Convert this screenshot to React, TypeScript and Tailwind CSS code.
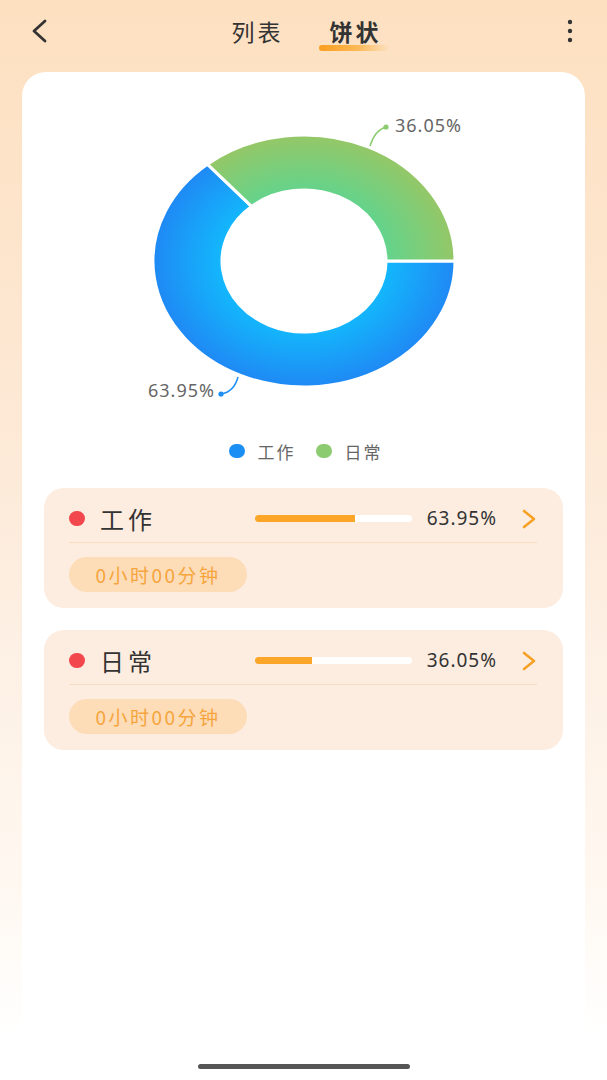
import type { ReactNode } from "react";

const cjk = "font-['Noto_Sans_CJK_SC','Noto_Sans',sans-serif]";

interface Item {
  name: string;
  percent: number;
  label: string;
  duration: string;
}

const items: Item[] = [
  { name: "工作", percent: 63.95, label: "63.95%", duration: "0小时00分钟" },
  { name: "日常", percent: 36.05, label: "36.05%", duration: "0小时00分钟" },
];

// donut geometry (svg coords, svg sits at the card's top-left)
const CX = 282;
const CY = 189;
const ORX = 151;
const ORY = 126;
const IRX = 82;
const IRY = 71;

function donutPaths(share: number) {
  const a = share * 2 * Math.PI;
  const ox = CX + ORX * Math.cos(a);
  const oy = CY - ORY * Math.sin(a);
  const ix = CX + IRX * Math.cos(a);
  const iy = CY - IRY * Math.sin(a);
  const green = `M${CX + ORX} ${CY} A${ORX} ${ORY} 0 0 0 ${ox} ${oy} L${ix} ${iy} A${IRX} ${IRY} 0 0 1 ${CX + IRX} ${CY} Z`;
  const blue = `M${ox} ${oy} A${ORX} ${ORY} 0 1 0 ${CX + ORX} ${CY} L${CX + IRX} ${CY} A${IRX} ${IRY} 0 1 1 ${ix} ${iy} Z`;
  return { green, blue };
}

function Donut() {
  const { green, blue } = donutPaths(0.3605);
  const gt = `translate(${CX} ${CY}) scale(1 0.834) translate(${-CX} ${-CY})`;
  return (
    <svg width="563" height="350" viewBox="0 0 563 350" className="block">
      <defs>
        <radialGradient id="gBlue" gradientUnits="userSpaceOnUse" cx={CX} cy={CY} r={ORX} gradientTransform={gt}>
          <stop offset="0.5" stopColor="#12bcfd" />
          <stop offset="1" stopColor="#1f89f4" />
        </radialGradient>
        <radialGradient id="gGreen" gradientUnits="userSpaceOnUse" cx={CX} cy={CY} r={ORX} gradientTransform={gt}>
          <stop offset="0.5" stopColor="#5dd590" />
          <stop offset="1" stopColor="#95c767" />
        </radialGradient>
      </defs>
      <path d={blue} fill="url(#gBlue)" stroke="#fff" strokeWidth="3" strokeLinejoin="round" />
      <path d={green} fill="url(#gGreen)" stroke="#fff" strokeWidth="3" strokeLinejoin="round" />

      <path d="M348 74 Q353 58 364 55" fill="none" stroke="#8ccb70" strokeWidth="1.5" />
      <circle cx="364" cy="55" r="2.6" fill="#8ccb70" />
      <text x="373" y="60" fill="#666" fontSize="18" letterSpacing="1" fontFamily="'Noto Sans', sans-serif">
        36.05%
      </text>

      <path d="M216 305 Q212 320 199 322" fill="none" stroke="#1c8ff5" strokeWidth="1.5" />
      <circle cx="199" cy="322" r="2.6" fill="#1c8ff5" />
      <text x="193" y="325" fill="#666" fontSize="18" letterSpacing="1" textAnchor="end" fontFamily="'Noto Sans', sans-serif">
        63.95%
      </text>
    </svg>
  );
}

function LegendItem({ color, label }: { color: string; label: string }) {
  return (
    <span className="flex items-center">
      <span className={`h-[14px] w-[16px] rounded-full ${color}`} />
      <span className={`ml-[13px] text-[17px] leading-none tracking-[2px] text-[#666] ${cjk}`}>{label}</span>
    </span>
  );
}

function Chevron({ className, children }: { className?: string; children?: ReactNode }) {
  return (
    <svg width="16" height="20" viewBox="0 0 16 20" className={className}>
      <path d="M3 2 L13 10 L3 18" fill="none" stroke="#f6a126" strokeWidth="2.6" strokeLinecap="round" strokeLinejoin="round" />
      {children}
    </svg>
  );
}

function CategoryCard({ item }: { item: Item }) {
  return (
    <div className="rounded-[20px] bg-[#fdede1] pl-[25px] pr-[26px] pb-[16px]">
      <div className="flex h-[55px] items-center border-b border-[#f9dcc1] pt-[7px]">
        <span className="h-[15px] w-[16px] shrink-0 rounded-full bg-[#f2474d]" />
        <span className={`ml-[15px] flex-1 text-[24px] leading-none tracking-[4px] text-[#333] ${cjk}`}>{item.name}</span>
        <div className="h-[7px] w-[157px] overflow-hidden rounded-full bg-white">
          <div className="h-full bg-[#fba629]" style={{ width: `${item.percent}%` }} />
        </div>
        <span className="ml-[11px] w-[74px] text-right font-['Noto_Sans',sans-serif] text-[19px] leading-none tracking-[1px] text-[#333]">
          {item.label}
        </span>
        <Chevron className="ml-[24px] shrink-0" />
      </div>
      <div className="mt-[14px] flex">
        <span className={`flex h-[35px] w-[178px] items-center justify-center rounded-full bg-[#fddcb8] text-[19px] leading-none tracking-[2.5px] text-[#f6a53d] ${cjk}`}>
          {item.duration}
        </span>
      </div>
    </div>
  );
}

export default function App() {
  return (
    <div className="relative h-[1080px] w-full overflow-hidden bg-[linear-gradient(180deg,#fde0c0_0%,#fde9d6_40%,#fdf0e4_60%,#fff8f1_82%,#ffffff_96%)]">
      <header className="grid h-[62px] grid-cols-[1fr_auto_1fr] items-center px-[28px]">
        <svg width="22" height="26" viewBox="0 0 22 26" className="ml-[2px]">
          <path d="M15 3 L4 13 L15 23" fill="none" stroke="#333" strokeWidth="2.8" strokeLinecap="round" strokeLinejoin="round" />
        </svg>
        <nav className={`ml-[6px] flex items-center gap-[46px] text-[23px] leading-none text-[#333] ${cjk}`}>
          <span className="tracking-[3px]">列表</span>
          <span className="relative font-bold tracking-[3px]">
            饼状
            <span className="absolute left-[-11px] top-[25px] h-[6px] w-[70px] rounded-full bg-[linear-gradient(90deg,#f99e1f_0%,#fbb955_55%,rgba(253,224,192,0)_100%)]" />
          </span>
        </nav>
        <svg width="8" height="26" viewBox="0 0 8 26" className="justify-self-end mr-[5px]">
          <circle cx="4" cy="4" r="2.2" fill="#333" />
          <circle cx="4" cy="13" r="2.2" fill="#333" />
          <circle cx="4" cy="22" r="2.2" fill="#333" />
        </svg>
      </header>

      <main className="mx-[22px] mt-[10px] h-[973px] rounded-[24px] bg-white">
        <Donut />
        <div className="mt-[19px] flex h-[20px] items-center justify-center gap-[20px] pl-[4px]">
          <LegendItem color="bg-[#1c8ff5]" label="工作" />
          <LegendItem color="bg-[#8ccb70]" label="日常" />
        </div>
        <div className="mx-[22px] mt-[27px] flex flex-col gap-[22px]">
          {items.map((item) => (
            <CategoryCard key={item.name} item={item} />
          ))}
        </div>
      </main>

      <div className="mx-auto mt-[19px] h-[5px] w-[212px] rounded-full bg-[#555]" />
    </div>
  );
}
